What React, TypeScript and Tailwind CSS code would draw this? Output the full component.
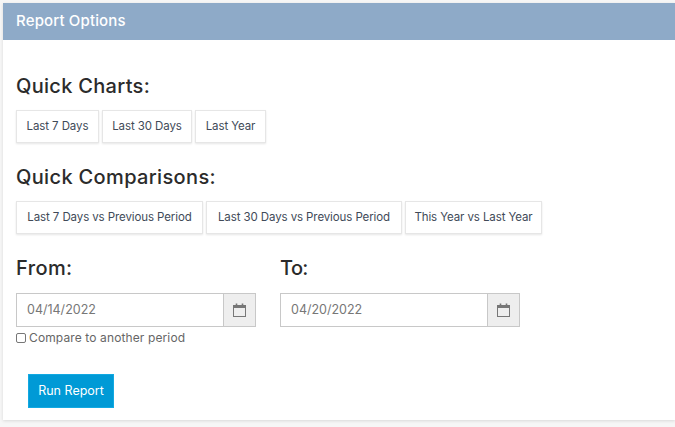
import React from "react";

function Btn({ label, w }: { label: string; w: string }) {
  return (
    <button className={`h-[33px] ${w} bg-white border border-[#e6e6e6] shadow-[0_1px_2px_rgba(0,0,0,0.1)] text-[11.5px] tracking-[-0.1px] text-[#414a58] whitespace-nowrap`}>
      {label}
    </button>
  );
}

function Cal() {
  return (
    <svg width="13" height="14" viewBox="0 0 13 14" fill="none" stroke="#777">
      <rect x="0.5" y="2.5" width="12" height="11" />
      <path d="M0.5 3.8H12.5" strokeWidth="2.4" />
      <path d="M3.5 0.5V3M9.5 0.5V3" strokeWidth="1.6" />
    </svg>
  );
}

function DateField({ value }: { value: string }) {
  return (
    <div className="flex w-[240px] h-[34px] border border-[#c8c8c8]">
      <div className="flex-1 flex items-center pl-[10px] text-[12.5px] text-[#777]">{value}</div>
      <div className="w-[32px] flex items-center justify-center bg-[#eeeeee] border-l border-[#c8c8c8]">
        <Cal />
      </div>
    </div>
  );
}

export default function App() {
  return (
    <div className="h-[427px] w-[675px] overflow-hidden bg-[#f6f6f6] pt-[3px] pl-[3px] font-['Inter',sans-serif]">
      <div className="h-[417px] bg-white shadow-[0_1px_3px_rgba(0,0,0,0.12)]">
        <div className="h-[37px] bg-[#8eaac8] flex items-center pl-[13px] pb-[1px] text-[15px] tracking-[0.15px] font-medium text-white">
          Report Options
        </div>
        <div className="pl-[13px]">
          <h2 className="mt-[33px] text-[20px] leading-[26px] tracking-[0.3px] font-medium text-[#2b2b2b]">Quick Charts:</h2>
          <div className="mt-[11px] flex gap-[3px]">
            <Btn w="w-[83px]" label="Last 7 Days" />
            <Btn w="w-[90px]" label="Last 30 Days" />
            <Btn w="w-[71px]" label="Last Year" />
          </div>
          <h2 className="mt-[21px] text-[20px] leading-[26px] tracking-[0.35px] font-medium text-[#2b2b2b]">Quick Comparisons:</h2>
          <div className="mt-[11px] flex gap-[3px]">
            <Btn w="w-[187px]" label="Last 7 Days vs Previous Period" />
            <Btn w="w-[196px]" label="Last 30 Days vs Previous Period" />
            <Btn w="w-[137px]" label="This Year vs Last Year" />
          </div>
          <div className="mt-[21px] flex gap-[24px]">
            <div>
              <h2 className="text-[20px] leading-[26px] tracking-[0.4px] font-medium text-[#2b2b2b]">From:</h2>
              <div className="mt-[12px]"><DateField value="04/14/2022" /></div>
              <label className="mt-[3px] flex items-center gap-[3px] text-[12px] tracking-[0.12px] leading-[16px] text-[#666]">
                <span className="w-[10px] h-[10px] border border-[#777] rounded-[2px] bg-white" />
                Compare to another period
              </label>
            </div>
            <div>
              <h2 className="text-[20px] leading-[26px] tracking-[-0.6px] font-medium text-[#2b2b2b]">To:</h2>
              <div className="mt-[12px]"><DateField value="04/20/2022" /></div>
            </div>
          </div>
          <button className="mt-[28px] ml-[12px] h-[34px] w-[86px] bg-[#009ad6] border border-[#12a9e2] text-white text-[12.5px]">
            Run Report
          </button>
        </div>
      </div>
    </div>
  );
}
